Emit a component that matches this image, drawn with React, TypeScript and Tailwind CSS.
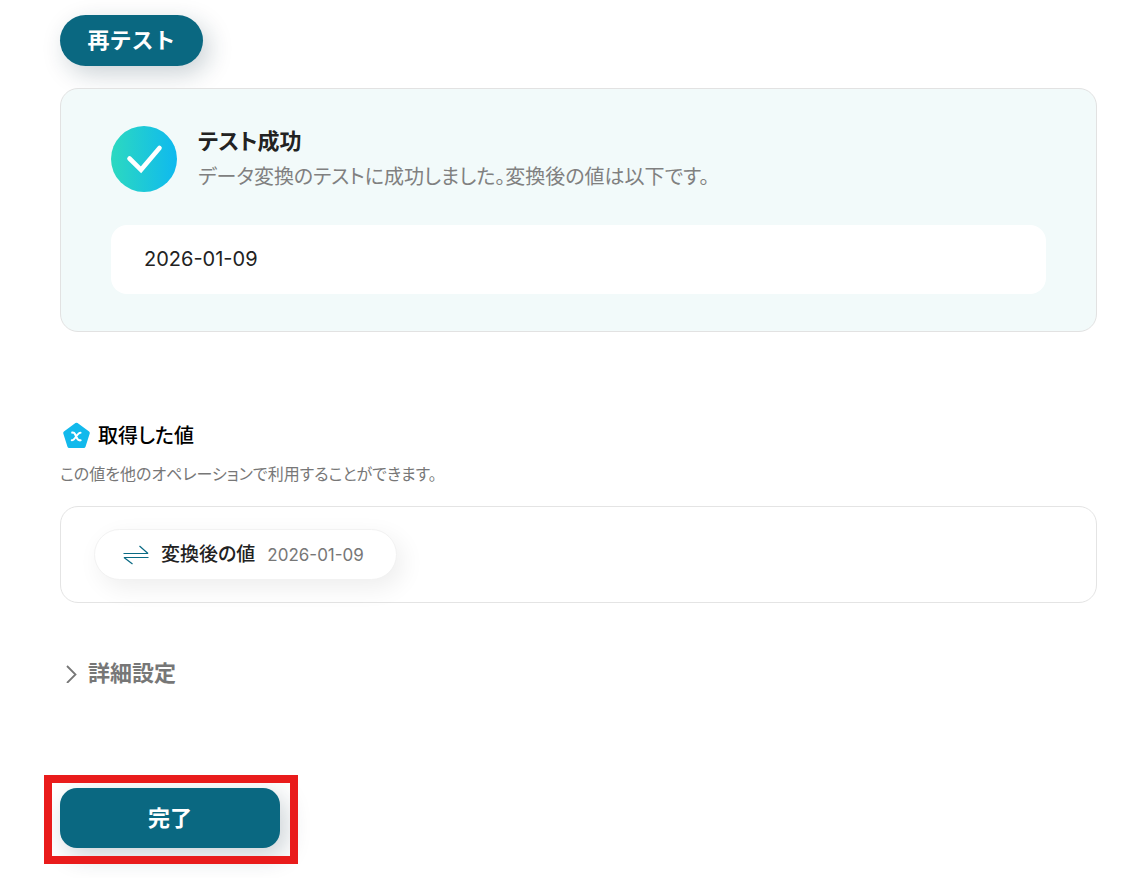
import React from 'react';

function SuccessIcon() {
  return (
    <svg className="size-[66px] shrink-0" viewBox="0 0 66 66" fill="none" aria-hidden="true">
      <defs>
        <linearGradient id="success" x1="0" y1="33" x2="66" y2="33" gradientUnits="userSpaceOnUse">
          <stop stopColor="#2cd9c0" />
          <stop offset="1" stopColor="#0fb9ef" />
        </linearGradient>
      </defs>
      <circle cx="33" cy="33" r="33" fill="url(#success)" />
      <path d="M18.5 32.5 L30 43.8 L48.5 22" stroke="#fff" strokeWidth="4.6" strokeLinecap="round" />
    </svg>
  );
}

function VariableIcon() {
  return (
    <svg className="h-7 w-8 shrink-0" viewBox="0 0 32 28" fill="none" aria-hidden="true">
      <path
        d="M16.5 2.5 L28 11 L23.8 24.3 H9.2 L5 11 Z"
        fill="#12b9ec"
        stroke="#12b9ec"
        strokeWidth="3.6"
        strokeLinejoin="round"
      />
      <path
        d="M12.2 10.6 C13.8 10.4 14.5 11 15.1 12.2 L17.3 16.8 C17.9 18 18.8 18.5 20.6 18.3 M20.5 10.7 C18.8 10.7 18 11.8 16.2 14.5 C14.4 17.2 13.6 18.3 11.8 18.3"
        stroke="#fff"
        strokeWidth="2.1"
        strokeLinecap="round"
      />
    </svg>
  );
}

function ConvertIcon() {
  return (
    <svg className="h-5 w-[26px] shrink-0" viewBox="0 0 26 20" fill="none" aria-hidden="true">
      <path
        d="M0.5 8.5 H25 L16.5 1 M25.5 12.5 H1 L9.5 19"
        stroke="#0a6a84"
        strokeWidth="1.2"
        strokeLinejoin="bevel"
      />
    </svg>
  );
}

export default function App() {
  return (
    <main
      lang="ja"
      className="flex flex-col items-start pt-[15px] pr-[46px] pb-[30px] pl-[60px] font-['Inter','Noto_Sans_CJK_JP',sans-serif] text-[#222] [font-feature-settings:'palt']"
    >
      <button
        type="button"
        className="h-[51px] min-w-[143px] rounded-full bg-[#0a6881] px-[27px] pb-0.5 text-[22px] leading-8 font-bold text-white shadow-[6px_8px_24px_rgba(20,50,70,0.22)] [font-feature-settings:normal]"
      >
        再テスト
      </button>

      <section className="mt-[22px] w-full rounded-[18px] border border-[#e2e2e2] bg-[#f2fafa] px-[50px] pt-[34px] pb-[37px]">
        <div className="flex items-center gap-[21px]">
          <SuccessIcon />
          <div>
            <h2 className="text-[22px] leading-9 font-bold">テスト成功</h2>
            <p className="text-[20px] leading-9 text-[#808080]">
              データ変換のテストに成功しました。変換後の値は以下です。
            </p>
          </div>
        </div>
        <div className="mt-[30px] rounded-2xl bg-white px-[33px] py-[18px] text-[20px] leading-[33px]">
          2026-01-09
        </div>
      </section>

      <section className="mt-[90px] w-full">
        <div className="flex items-center gap-[6px]">
          <VariableIcon />
          <h2 className="text-[20px] leading-7 font-medium text-black">取得した値</h2>
        </div>
        <p className="mt-3 text-[16px] leading-6 text-[#777]">
          この値を他のオペレーションで利用することができます。
        </p>
        <div className="mt-5 flex rounded-[18px] border border-[#e4e4e4] px-[33px] py-[22px]">
          <div className="flex h-[51px] items-center rounded-full border border-[#f2f2f2] bg-white pr-8 pl-7 shadow-[6px_8px_24px_rgba(0,0,0,0.07)]">
            <ConvertIcon />
            <span className="ml-3 text-[19px] leading-7 font-medium">変換後の値</span>
            <span className="ml-3 text-[17px] leading-7 text-[#777]">2026-01-09</span>
          </div>
        </div>
      </section>

      <button
        type="button"
        aria-expanded="false"
        className="mt-[54px] flex items-center gap-[10px] pl-[5px] text-[22px] leading-8 font-bold text-[#777]"
      >
        <svg className="h-5 w-[13px]" viewBox="0 0 13 20" fill="none" aria-hidden="true">
          <path d="M2 3 L10.5 11.5 L2 20" stroke="#777" strokeWidth="1.8" />
        </svg>
        詳細設定
      </button>

      <div className="relative mt-[99px]">
        <button
          type="button"
          className="h-[60px] w-[220px] rounded-[17px] bg-[#0a6881] text-[22px] leading-8 font-bold text-white shadow-[6px_8px_24px_rgba(20,50,70,0.22)] [font-feature-settings:normal]"
        >
          完了
        </button>
        <div className="pointer-events-none absolute -top-[13px] -right-[18px] -bottom-4 -left-4 border-8 border-[#e91b1b]" />
      </div>
    </main>
  );
}
